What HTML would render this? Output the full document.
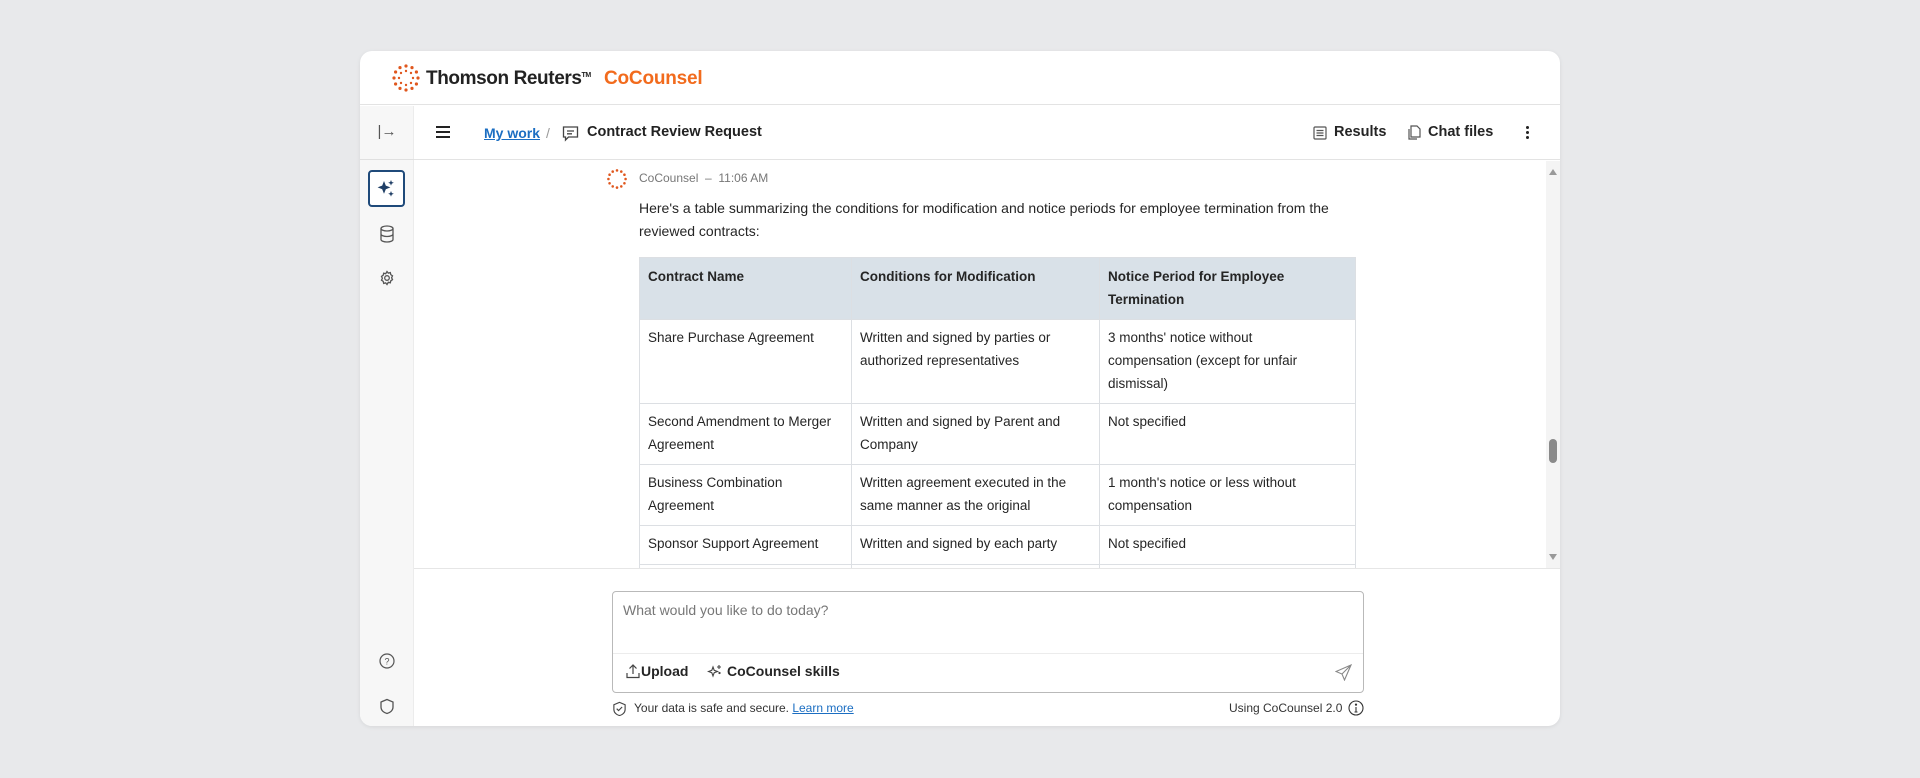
<!DOCTYPE html>
<html><head><meta charset="utf-8"><style>
*{box-sizing:border-box;margin:0;padding:0}
body{width:1920px;height:778px;background:#e8e9eb;font-family:"Liberation Sans",sans-serif;color:#252525;position:relative;overflow:hidden}
.card{position:absolute;left:360px;top:51px;width:1200px;height:675px;background:#fff;border-radius:12px;overflow:hidden;box-shadow:0 1px 4px rgba(0,0,0,.08)}
.abs{position:absolute}
.hdr{left:0;top:0;width:1200px;height:54px;border-bottom:1px solid #e3e3e3}
.side{left:0;top:55px;width:54px;height:620px;background:#f7f7f7;border-right:1px solid #ececec}
.nav{left:54px;top:55px;width:1146px;height:54px;border-bottom:1px solid #e3e3e3}
.t{font-size:14px;line-height:23px}
table{position:absolute;border-collapse:collapse;font-size:13.5px;line-height:23px}
td,th{border:1px solid #dcdfe3;padding:6px 12px 6px 8px;vertical-align:top;text-align:left}
th{background:#d9e1e8;font-weight:bold;padding-top:7px}
</style></head><body>
<div class="card">
 <div class="abs hdr">
  <svg class="abs" style="left:32px;top:13px" width="28" height="28" viewBox="0 0 28 28"><g fill="#e0571e">
   <circle cx="14" cy="2" r="1.6"/><circle cx="20" cy="3.6" r="1.6"/><circle cx="24.4" cy="8" r="1.6"/><circle cx="26" cy="14" r="1.6"/><circle cx="24.4" cy="20" r="1.6"/><circle cx="20" cy="24.4" r="1.6"/><circle cx="14" cy="26" r="1.6"/><circle cx="8" cy="24.4" r="1.6"/><circle cx="3.6" cy="20" r="1.6"/><circle cx="2" cy="14" r="1.6"/><circle cx="3.6" cy="8" r="1.6"/><circle cx="8" cy="3.6" r="1.6"/>
   <circle cx="14" cy="7" r="1.2"/><circle cx="19" cy="9" r="1.2"/><circle cx="21" cy="14" r="1.2"/><circle cx="19" cy="19" r="1.2"/><circle cx="14" cy="21" r="1.2"/><circle cx="9" cy="19" r="1.2"/><circle cx="7" cy="14" r="1.2"/><circle cx="9" cy="9" r="1.2"/></g></svg>
  <div class="abs" style="left:66px;top:17px;font-size:19px;font-weight:bold;color:#222;letter-spacing:-.4px">Thomson Reuters<span style="font-size:7px;vertical-align:top;position:relative;top:4px">TM</span></div>
  <div class="abs" style="left:244px;top:17px;font-size:19px;font-weight:bold;color:#f26b1d;letter-spacing:-.2px">CoCounsel</div>
 </div>
 <div class="abs side">
  <div class="abs" style="left:0;top:0;width:54px;height:54px;border-bottom:1px solid #e0e0e0;text-align:center;line-height:52px;font-size:15px;color:#555">|→</div>
  <div class="abs" style="left:8px;top:64px;width:37px;height:37px;border:2px solid #1f4a7a;border-radius:4px;background:#fff"><svg width="33" height="33" viewBox="0 0 33 33"><path d="M14 9l1.8 4.6 4.6 1.8-4.6 1.8L14 21.8l-1.8-4.6-4.6-1.8 4.6-1.8z" fill="#1f3f66"/><path d="M21 8l.8 2 2 .8-2 .8-.8 2-.8-2-2-.8 2-.8zM21 19l.8 2 2 .8-2 .8-.8 2-.8-2-2-.8 2-.8z" fill="#1f3f66"/></svg></div>
  <svg class="abs" style="left:19px;top:119px" width="16" height="18" viewBox="0 0 16 18" fill="none" stroke="#555" stroke-width="1.3"><ellipse cx="8" cy="3.5" rx="6" ry="2.5"/><path d="M2 3.5v11c0 1.4 2.7 2.5 6 2.5s6-1.1 6-2.5v-11M2 9c0 1.4 2.7 2.5 6 2.5s6-1.1 6-2.5"/></svg>
  <svg class="abs" style="left:19px;top:164px" width="16" height="16" viewBox="0 0 16 16" fill="none" stroke="#555" stroke-width="1.3"><circle cx="8" cy="8" r="2.3"/><path d="M8 1.5l1.3 1.6 2-.5.5 2 1.7 1.2-.9 1.9.9 1.9-1.7 1.2-.5 2-2-.5L8 14.5l-1.3-1.6-2 .5-.5-2-1.7-1.2.9-1.9-.9-1.9 1.7-1.2.5-2 2 .5z"/></svg>
  <svg class="abs" style="left:19px;top:547px" width="16" height="16" viewBox="0 0 16 16" fill="none" stroke="#555" stroke-width="1.2"><circle cx="8" cy="8" r="7"/><text x="8" y="11.5" font-size="9" text-anchor="middle" fill="#555" stroke="none" font-family="Liberation Sans">?</text></svg>
  <svg class="abs" style="left:19px;top:592px" width="16" height="17" viewBox="0 0 16 17" fill="none" stroke="#555" stroke-width="1.3"><path d="M8 1.5L14 4v5c0 3.5-3 5.8-6 6.5-3-.7-6-3-6-6.5V4z"/></svg>
 </div>
 <div class="abs nav">
  <div class="abs" style="left:22px;top:20px;width:14px"><div style="height:2px;background:#222;margin-bottom:3px"></div><div style="height:2px;background:#222;margin-bottom:3px"></div><div style="height:2px;background:#222"></div></div>
  <div class="abs" style="left:70px;top:19px;font-size:14px;font-weight:bold;color:#1b6ec2;text-decoration:underline">My work</div>
  <div class="abs" style="left:132px;top:19px;font-size:14px;color:#999">/</div>
  <svg class="abs" style="left:148px;top:19px" width="17" height="17" viewBox="0 0 17 17" fill="none" stroke="#444" stroke-width="1.3"><path d="M1.5 2h14v10h-9l-3 3v-3h-2z"/><path d="M5 6h7M5 8.8h5"/></svg>
  <div class="abs" style="left:173px;top:18px;font-size:14.5px;font-weight:bold;color:#222">Contract Review Request</div>
  <svg class="abs" style="left:899px;top:20px" width="14" height="14" viewBox="0 0 14 14" fill="none" stroke="#555" stroke-width="1.2"><rect x="1" y="1" width="12" height="12" rx="1"/><path d="M3.5 4.5h7M3.5 7h7M3.5 9.5h7"/></svg>
  <div class="abs" style="left:920px;top:18px;font-size:14.5px;font-weight:bold">Results</div>
  <svg class="abs" style="left:993px;top:19px" width="15" height="16" viewBox="0 0 15 16" fill="none" stroke="#555" stroke-width="1.2"><path d="M4 1h6l3 3v8H4z"/><path d="M2 4v10h8"/></svg>
  <div class="abs" style="left:1014px;top:18px;font-size:14.5px;font-weight:bold">Chat files</div>
  <div class="abs" style="left:1112px;top:20px;width:4px"><div style="width:3px;height:3px;background:#222;border-radius:2px;margin-bottom:2px"></div><div style="width:3px;height:3px;background:#222;border-radius:2px;margin-bottom:2px"></div><div style="width:3px;height:3px;background:#222;border-radius:2px"></div></div>
 </div>
 <!-- chat -->
 <div class="abs" style="left:54px;top:110px;width:1146px;height:407px;overflow:hidden">
  <svg class="abs" style="left:193px;top:8px" width="20" height="20" viewBox="0 0 28 28"><g fill="#e0571e"><circle cx="14" cy="2" r="1.8"/><circle cx="20" cy="3.6" r="1.8"/><circle cx="24.4" cy="8" r="1.8"/><circle cx="26" cy="14" r="1.8"/><circle cx="24.4" cy="20" r="1.8"/><circle cx="20" cy="24.4" r="1.8"/><circle cx="14" cy="26" r="1.8"/><circle cx="8" cy="24.4" r="1.8"/><circle cx="3.6" cy="20" r="1.8"/><circle cx="2" cy="14" r="1.8"/><circle cx="3.6" cy="8" r="1.8"/><circle cx="8" cy="3.6" r="1.8"/></g></svg>
  <div class="abs" style="left:225px;top:10px;font-size:12px;color:#777">CoCounsel &nbsp;–&nbsp; 11:06 AM</div>
  <div class="abs t" style="left:225px;top:36px;width:740px">Here's a table summarizing the conditions for modification and notice periods for employee termination from the reviewed contracts:</div>
  <table style="left:225px;top:96px;width:717px">
   <tr style="height:62px"><th style="width:212px">Contract Name</th><th style="width:248px">Conditions for Modification</th><th style="padding-right:40px">Notice Period for Employee Termination</th></tr>
   <tr style="height:84px"><td>Share Purchase Agreement</td><td>Written and signed by parties or authorized representatives</td><td style="padding-right:40px">3 months' notice without compensation (except for unfair dismissal)</td></tr>
   <tr style="height:61px"><td>Second Amendment to Merger Agreement</td><td>Written and signed by Parent and Company</td><td>Not specified</td></tr>
   <tr style="height:61px"><td>Business Combination Agreement</td><td>Written agreement executed in the same manner as the original</td><td>1 month's notice or less without compensation</td></tr>
   <tr style="height:39px"><td>Sponsor Support Agreement</td><td>Written and signed by each party</td><td>Not specified</td></tr>
   <tr style="height:30px"><td></td><td></td><td></td></tr>
  </table>
  <div class="abs" style="left:1132px;top:0;width:14px;height:407px;background:#f4f4f4"></div>
  <div class="abs" style="left:1135px;top:8px;width:0;height:0;border-left:4px solid transparent;border-right:4px solid transparent;border-bottom:6px solid #999"></div>
  <div class="abs" style="left:1135px;top:393px;width:0;height:0;border-left:4px solid transparent;border-right:4px solid transparent;border-top:6px solid #999"></div>
  <div class="abs" style="left:1135px;top:278px;width:8px;height:24px;background:#8a8a8a;border-radius:4px"></div>
 </div>
 <div class="abs" style="left:54px;top:517px;width:1146px;height:1px;background:#e6e6e6"></div>
 <!-- input -->
 <div class="abs" style="left:252px;top:540px;width:752px;height:102px;border:1px solid #b9b9b9;border-radius:4px">
  <div class="abs" style="left:10px;top:10px;font-size:14px;color:#777">What would you like to do today?</div>
  <div class="abs" style="left:0;top:61px;width:750px;height:1px;background:#ececec"></div>
  <svg class="abs" style="left:13px;top:71px" width="14" height="16" viewBox="0 0 14 16" fill="none" stroke="#444" stroke-width="1.2"><path d="M7 11V2M3.5 5.5L7 2l3.5 3.5M1 10v4.5h12V10"/></svg>
  <div class="abs" style="left:28px;top:71px;font-size:14px;font-weight:bold">Upload</div>
  <svg class="abs" style="left:94px;top:71px" width="16" height="16" viewBox="0 0 16 16" fill="none" stroke="#444" stroke-width="1.1"><path d="M6 4l1.2 3.3L10.5 8.5 7.2 9.7 6 13 4.8 9.7 1.5 8.5 4.8 7.3z"/><path d="M12 2v4M10 4h4"/><circle cx="12.5" cy="10" r=".6"/></svg>
  <div class="abs" style="left:114px;top:71px;font-size:14px;font-weight:bold">CoCounsel skills</div>
  <svg class="abs" style="left:722px;top:72px" width="17" height="17" viewBox="0 0 17 17" fill="none" stroke="#888" stroke-width="1.1"><path d="M16 1L1 7.5l6 2.5 2.5 6z M7 10L16 1"/></svg>
 </div>
 <svg class="abs" style="left:252px;top:650px" width="15" height="15" viewBox="0 0 16 16" fill="none" stroke="#444" stroke-width="1.2"><path d="M8 1.5L14 4v5c0 3.5-3 5.8-6 6.5-3-.7-6-3-6-6.5V4z"/><path d="M5 8.2l2 2 3.8-3.8"/></svg>
 <div class="abs" style="left:274px;top:650px;font-size:12px;color:#333">Your data is safe and secure. <span style="color:#1b6ec2;text-decoration:underline">Learn more</span></div>
 <div class="abs" style="left:869px;top:650px;font-size:12px;color:#333">Using CoCounsel 2.0</div>
 <svg class="abs" style="left:988px;top:649px" width="16" height="16" viewBox="0 0 16 16" fill="none" stroke="#333" stroke-width="1.1"><circle cx="8" cy="8" r="7"/><path d="M8 7v5M6.5 12h3"/><circle cx="8" cy="4.6" r=".6" fill="#333"/></svg>
</div>
</body></html>
